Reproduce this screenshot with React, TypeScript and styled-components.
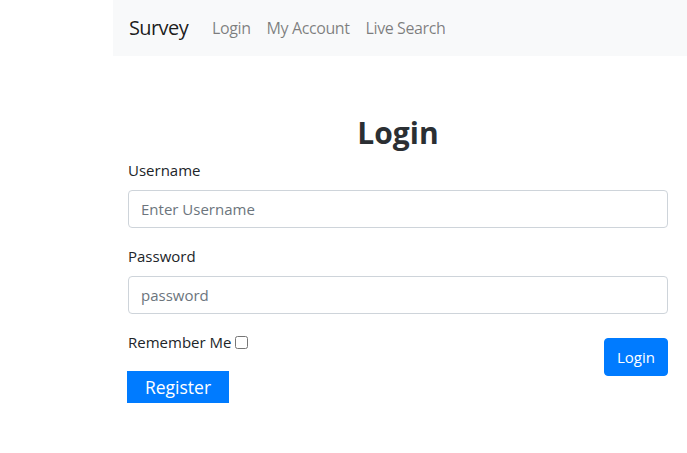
import React, { useState } from "react";
import styled, { createGlobalStyle } from "styled-components";

const GlobalStyle = createGlobalStyle`
  * { box-sizing: border-box; }
  body {
    margin: 0;
    background: #fff;
    color: #212529;
    font-family: "Open Sans", "Noto Sans", "Liberation Sans", sans-serif;
    font-size: 16px;
    line-height: 1.5;
  }
`;

const Page = styled.div`
  padding-left: 113px;
`;

const Navbar = styled.nav`
  display: flex;
  align-items: center;
  height: 56px;
  padding: 0 16px;
  background: #f8f9fa;
`;

const Brand = styled.a`
  font-size: 20px;
  color: rgba(0, 0, 0, 0.9);
  margin-right: 24px;
  text-decoration: none;
  letter-spacing: -0.6px;
`;

const NavLinks = styled.div`
  display: flex;
  gap: 16px;
`;

const NavLink = styled.a`
  font-size: 16px;
  color: rgba(0, 0, 0, 0.5);
  text-decoration: none;
  letter-spacing: -0.4px;
`;

const Container = styled.main`
  width: 570px;
  padding: 56px 15px 0;
`;

const Title = styled.h2`
  margin: 0 0 4px;
  text-align: center;
  font-size: 30px;
  font-weight: 700;
  line-height: 42px;
  color: #2b2f33;
`;

const FormGroup = styled.div`
  margin-bottom: 16px;
`;

const Label = styled.label`
  display: block;
  margin-bottom: 8px;
  font-size: 15px;
  line-height: 24px;
`;

const Input = styled.input`
  display: block;
  width: 100%;
  height: 38px;
  padding: 6px 12px;
  font: inherit;
  font-size: 15px;
  color: #495057;
  border: 1px solid #ced4da;
  border-radius: 4px;
  outline: none;
  &::placeholder { color: #6c757d; }
`;

const BottomRow = styled.div`
  display: flex;
  justify-content: space-between;
  align-items: flex-start;
`;

const Left = styled.div`
  display: flex;
  flex-direction: column;
  align-items: flex-start;
`;

const Remember = styled.label`
  display: flex;
  align-items: center;
  font-size: 15px;
  height: 24px;
  margin-bottom: 17px;
`;

const Check = styled.input`
  margin: 0 0 0 4px;
  width: 13px;
  height: 13px;
`;

const Button = styled.button<{ $square?: boolean }>`
  font: inherit;
  font-size: 15px;
  color: #fff;
  background: #007bff;
  border: 1px solid #007bff;
  border-radius: ${p => (p.$square ? "0" : "4px")};
  cursor: pointer;
`;

const RegisterButton = styled(Button)`
  margin-left: -1px;
  width: 102px;
  height: 32px;
  font-size: 17.5px;
  padding: 0;
`;

const LoginButton = styled(Button)`
  margin-top: 8px;
  height: 38px;
  padding: 0 12px;
`;

export default function App() {
    const [username, setUsername] = useState("");
    const [password, setPassword] = useState("");
    const [remember, setRemember] = useState(false);

    return (<Page>
        <GlobalStyle />
        <Navbar>
            <Brand href="#">Survey</Brand>
            <NavLinks>
                <NavLink href="#">Login</NavLink>
                <NavLink href="#">My Account</NavLink>
                <NavLink href="#">Live Search</NavLink>
            </NavLinks>
        </Navbar>
        <Container>
            <Title>Login</Title>
            <form onSubmit={e => e.preventDefault()}>
                <FormGroup>
                    <Label htmlFor="username">Username</Label>
                    <Input id="username" placeholder="Enter Username" value={username} onChange={e => setUsername(e.target.value)} />
                </FormGroup>
                <FormGroup>
                    <Label htmlFor="password">Password</Label>
                    <Input id="password" type="password" placeholder="password" value={password} onChange={e => setPassword(e.target.value)} />
                </FormGroup>
                <BottomRow>
                    <Left>
                        <Remember>Remember Me<Check type="checkbox" checked={remember} onChange={e => setRemember(e.target.checked)} /></Remember>
                        <RegisterButton type="button" $square>Register</RegisterButton>
                    </Left>
                    <LoginButton type="submit">Login</LoginButton>
                </BottomRow>
            </form>
        </Container>
    </Page>);
}
